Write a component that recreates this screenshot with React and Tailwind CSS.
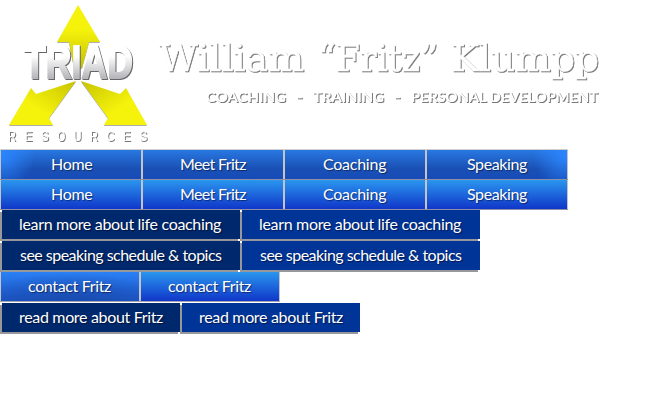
const shade = '[text-shadow:1px_1px_1px_rgba(0,0,20,0.5)]';

function Button({ children, className }) {
  return (
    <a className={`flex h-[29px] shrink-0 items-center whitespace-nowrap pb-[2px] text-[16px] leading-none text-white ${shade} ${className}`}>
      {children}
    </a>
  );
}

const nav = [
  { label: 'Home', cls: 'pl-[50px] tracking-[-0.3px]', glow: 'bg-[radial-gradient(ellipse_34px_35px_at_0%_15%,#2b86ff,transparent),linear-gradient(#2878e2,#1a50b4_65%,#164bb8)]' },
  { label: 'Meet Fritz', cls: 'pl-[37px] tracking-[-0.65px]', glow: 'bg-[linear-gradient(#2878e2,#1a50b4_65%,#164bb8)]' },
  { label: 'Coaching', cls: 'pl-[38px] tracking-[-0.25px]', glow: 'bg-[linear-gradient(#2878e2,#1a50b4_65%,#164bb8)]' },
  { label: 'Speaking', cls: 'pl-[40px] tracking-[-0.4px]', glow: 'bg-[radial-gradient(ellipse_34px_35px_at_100%_15%,#2b86ff,transparent),linear-gradient(#2878e2,#1a50b4_65%,#164bb8)]' },
];

function NavRow({ hover }) {
  return (
    <div className="flex h-[30px] w-[568px] gap-[2px] border-b border-[#8e91a5] bg-[#c4c4c8] pl-px pr-px">
      {nav.map((n) => (
        <Button key={n.label} className={`w-[140px] ${n.cls} ${hover ? 'bg-[linear-gradient(#2a96ee,#1036c9)]' : n.glow}`}>
          {n.label}
        </Button>
      ))}
    </div>
  );
}

const cell = 'h-[31px] bg-[linear-gradient(#97989c,#97989c)] bg-no-repeat bg-[position:left_bottom] bg-[size:calc(100%-2px)_29px] pl-[2px]';

function Pair({ label, width, cls }) {
  return (
    <div className="flex h-[31px] w-max">
      <div className={cell}>
        <Button className={`bg-[#00286c] ${width} ${cls}`}>{label}</Button>
      </div>
      <div className={cell}>
        <Button className={`bg-[#003497] ${width} ${cls}`}>{label}</Button>
      </div>
    </div>
  );
}

function Header() {
  return (
    <svg width="650" height="149" viewBox="0 0 650 149" className="block">
      <defs>
        <linearGradient id="metal" x1="0" y1="0" x2="0" y2="1">
          <stop offset="0.4" stopColor="#fff" />
          <stop offset="0.8" stopColor="#b8b8bc" />
        </linearGradient>
        <linearGradient id="up" x1="0" y1="0" x2="0" y2="1">
          <stop offset="0.4" stopColor="#f5f20c" />
          <stop offset="1" stopColor="#c4c000" />
        </linearGradient>
        <linearGradient id="left" x1="1" y1="0" x2="0" y2="1">
          <stop offset="0" stopColor="#c8c400" />
          <stop offset="0.6" stopColor="#f5f20c" />
        </linearGradient>
        <linearGradient id="right" x1="0" y1="0" x2="1" y2="1">
          <stop offset="0" stopColor="#c8c400" />
          <stop offset="0.6" stopColor="#f5f20c" />
        </linearGradient>
      </defs>
      <g className="[filter:drop-shadow(0px_1px_0.5px_#77777799)]">
        <path d="M78 5L100 42H89L82 68H74L69 42H57Z" fill="url(#up)" />
        <path d="M76 81L49 118L53 125H9L31 88L36 94Z" fill="url(#left)" />
        <path d="M81 81L120 94L126 88L147 125H104L108 118Z" fill="url(#right)" />
      </g>
      <g className="[filter:drop-shadow(1px_1px_0.5px_#666)]" fill="url(#metal)" fontFamily="'Liberation Sans', sans-serif" fontWeight="700" stroke="url(#metal)" strokeWidth="1.8">
        <text x="24" y="78" fontSize="47" textLength="109" lengthAdjust="spacingAndGlyphs">TRIAD</text>
      </g>
      <g className="[filter:drop-shadow(1px_1px_0.3px_#777)]" fill="#fff" fontFamily="'Liberation Sans', sans-serif" fontSize="14">
        {[...'RESOURCES'].map((c, i) => (
          <text key={i} x={8 + i * 16.4} y="141" textLength="8" lengthAdjust="spacingAndGlyphs">{c}</text>
        ))}
      </g>
      <g className="[filter:drop-shadow(1px_1px_0.5px_#777)]" fill="#fff">
        <g fontFamily="'DejaVu Serif', serif" fontSize="38" stroke="#fff" strokeWidth="0.5">
          <text x="159" y="71" textLength="145" lengthAdjust="spacingAndGlyphs">William</text>
          <text x="318" y="71" textLength="120" lengthAdjust="spacingAndGlyphs">“Fritz”</text>
          <text x="451" y="71" textLength="148" lengthAdjust="spacingAndGlyphs">Klumpp</text>
        </g>
        <g fontFamily="Lato, sans-serif" fontSize="14" fontWeight="700">
          <text x="206" y="102" textLength="80" lengthAdjust="spacingAndGlyphs">COACHING</text>
          <text x="296" y="102" textLength="7" lengthAdjust="spacingAndGlyphs">-</text>
          <text x="313" y="102" textLength="71" lengthAdjust="spacingAndGlyphs">TRAINING</text>
          <text x="394" y="102" textLength="7" lengthAdjust="spacingAndGlyphs">-</text>
          <text x="411" y="102" textLength="187" lengthAdjust="spacingAndGlyphs">PERSONAL DEVELOPMENT</text>
        </g>
      </g>
    </svg>
  );
}

export default function App() {
  return (
    <main className="h-[400px] w-[650px] overflow-hidden bg-white font-[Lato,sans-serif]">
      <Header />
      <div className="h-px w-[568px] bg-[#cfcfcf]" />
      <NavRow />
      <NavRow hover />
      <Pair label="learn more about life coaching" width="w-[238px]" cls="pl-[17px] tracking-[-0.32px]" />
      <Pair label="see speaking schedule & topics" width="w-[238px]" cls="pl-[18px] tracking-[-0.53px]" />
      <div className="flex h-[30px] w-[280px] gap-[2px] border-b border-[#a5a5b5] bg-[#c4c4c8] pl-px pr-px">
        <Button className="w-[138px] bg-[radial-gradient(ellipse_100px_28px_at_50%_100%,#1a4cb0,#1a4cb099_45%,transparent),linear-gradient(#2b80f5,#1b55c8)] pl-[27px] tracking-[-0.35px]">contact Fritz</Button>
        <Button className="w-[138px] bg-[linear-gradient(#2a96ee,#1036c9)] pl-[27px] tracking-[-0.35px]">contact Fritz</Button>
      </div>
      <div className="h-px" />
      <Pair label="read more about Fritz" width="w-[178px]" cls="pl-[17px] tracking-[-0.33px]" />
    </main>
  );
}
